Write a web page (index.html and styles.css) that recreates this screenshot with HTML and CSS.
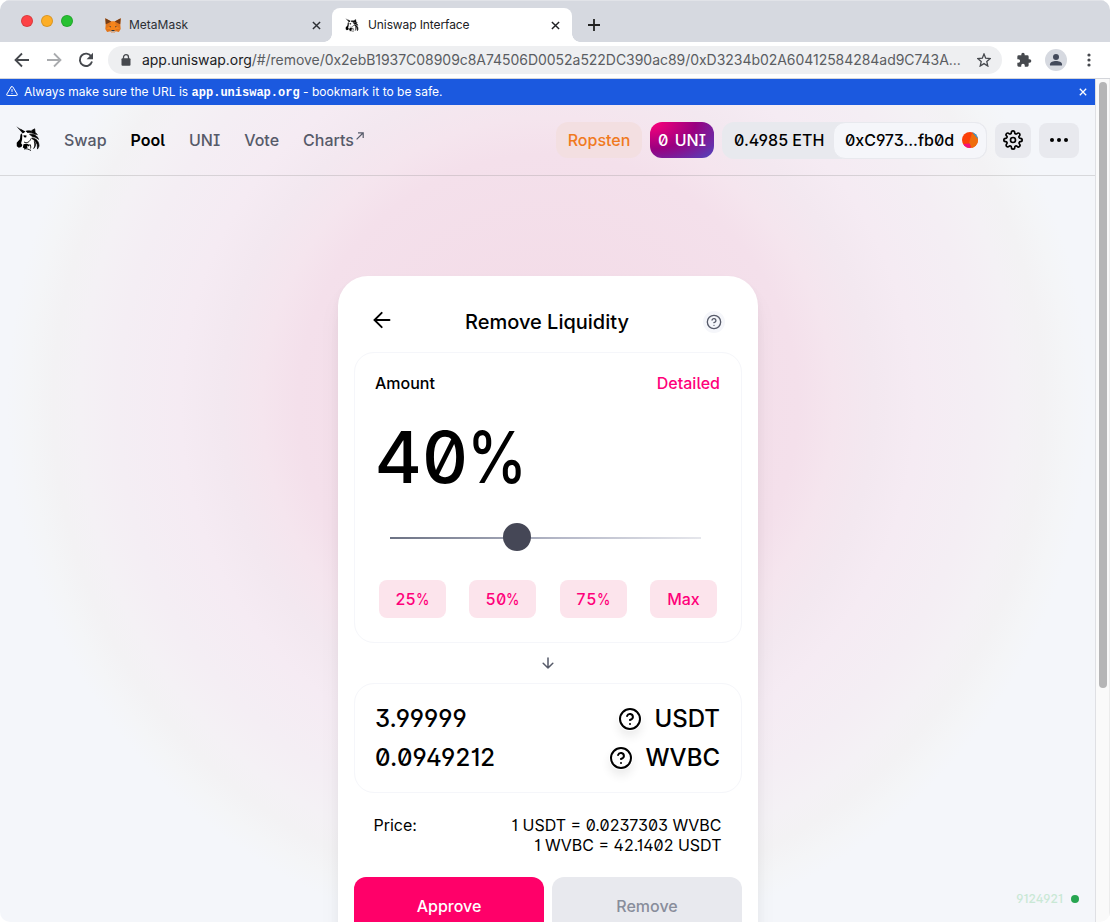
FILE: index.html
```html
<!DOCTYPE html>
<html lang="en">
<head>
<meta charset="utf-8">
<title>Uniswap Interface</title>
<link rel="stylesheet" href="styles.css">
</head>
<body>
<svg width="0" height="0" class="defs">
  <symbol id="unicorn" viewBox="0 0 24 25">
    <path fill="#fff" d="M7 7 13 5l6 3 2 6-2 7-5 2-8-2-2-5z"/>
    <path d="M.3.3 8.200 5.800 6.800 7.400z"/>
    <path d="M4 2.400 9.300 5.500 7.600 7.200z"/>
    <path d="M5.300 7.200C3.800 9 4.600 11 3.800 13.200L.7 16.800l.1 3.400 2 1.500 2.600-.6 1-2-1.300-1.800 1-3.800L6.300 9z"/>
    <path d="M7.400 9.300l3.200.1-.5 2.200-2.100-.3z"/>
    <path stroke="#000" stroke-width=".7" d="M10 5.200c3.600-1 7.600-.2 9.500 3.200-2.800-1.600-5-1.900-8.200-1.900zM13.500 8.300c4.400-.8 7.900 1.500 9.100 5.100-2.100-1.800-3.600-2.400-6-2.700zM15.800 12c4.100.1 7.300 3.300 7.200 8.100l-1.500 3-.2-4.300c-.9-2.600-3.100-4.700-5.500-6.400zM15.700 4.500l3-1.700.4 3.500 2.300 2.400-2.900-1.400zM18.300 15.300c1.700 2.200 1.800 4.700-.6 7.200 1.400-2.300 1.200-4.400.6-7.200z"/>
    <path fill="none" stroke="#000" stroke-width=".9" d="M8 16c3 1.800 6-.4 7-3.500M8 23c2.500-.8 5 .4 7 1.500M13.500 18c1.300 1 1.500 2.800 1 4.500"/>
    <path d="M7.500 18.300c2-1.200 5-.6 6.300 1l-1.100 1.200-1.700-1 .6 2-2.300 1.600-2.500-1.500z"/>
  </symbol>
  <symbol id="help" viewBox="0 0 24 24">
    <g fill="none" stroke="currentColor" stroke-width="2" stroke-linecap="round" stroke-linejoin="round"><circle cx="12" cy="12" r="10"/><path d="M9.090 9a3 3 0 0 1 5.830 1c0 2-3 3-3 3M12 17h.01"/></g>
  </symbol>
  <symbol id="cross" viewBox="0 0 10 10"><path fill="none" stroke="currentColor" stroke-width="1.600" d="M1 1l8 8M9 1 1 9"/></symbol>
</svg>
<div class="window">
  <div class="tabstrip">
    <div class="lights"><i class="red"></i><i class="amber"></i><i class="green"></i></div>
    <div class="tab">
      <svg class="fox" viewBox="0 0 16 15"><path fill="#e2761b" d="M.3.3 6.300 3.500h3.400L15.700.3l-.4 6.200.4 4.500-1.800 3-3.200-.8-1.300 1.500H6.600l-1.300-1.500-3.200.8L.3 11l.4-4.500z"/><path fill="#763d16" d="M.3.3 6.300 3.500 2.500 5.400.8 6.200zM15.700.3 9.700 3.500l3.800 1.900 1.700.8z"/><path fill="#f6851b" d="M6.300 3.500 5 7.500 1 11h4l1.500 2h3L11 11h4l-4-3.500-1.300-4z"/><path fill="#233447" d="M4 8l2 .5-.3 1zM12 8l-2 .5.3 1zM6.600 12h2.800l.2 1.300H6.400z"/><path fill="#d7c1b3" d="M5.300 12.400l1.100.9h3.200l1.100-.9-1.300 2.300H6.600z"/></svg>
      <span class="tab-title">MetaMask</span>
      <svg class="x"><use href="#cross"/></svg>
    </div>
    <div class="tab active">
      <svg class="uni"><use href="#unicorn"/></svg>
      <span class="tab-title">Uniswap Interface</span>
      <svg class="x"><use href="#cross"/></svg>
    </div>
    <svg class="plus" viewBox="0 0 12 12"><path stroke="#222" stroke-width="1.800" d="M6 0v12M0 6h12"/></svg>
  </div>
  <div class="toolbar">
    <svg class="nav" viewBox="0 0 16 16"><path fill="none" stroke="#46494e" stroke-width="1.800" d="M15 8H2M8 1.500 1.500 8 8 14.500"/></svg>
    <svg class="nav" viewBox="0 0 16 16"><path fill="none" stroke="#a9abae" stroke-width="1.800" d="M1 8h13M8 1.500 14.500 8 8 14.500"/></svg>
    <svg class="nav" viewBox="0 0 16 16"><path fill="none" stroke="#46494e" stroke-width="1.900" d="M13.300 4.500A6.200 6.200 0 1 0 14 9.500"/><path fill="#46494e" d="M15 .8v6.400H8.600z"/></svg>
    <div class="omnibox">
      <svg class="lock" viewBox="0 0 10 12"><rect x=".5" y="4.300" width="9" height="7.500" rx="1" fill="#46494e"/><path fill="none" stroke="#46494e" stroke-width="1.300" d="M2.500 5V3.200a2.500 2.500 0 0 1 5 0V5"/></svg>
      <span class="url"><b>app.uniswap.org</b>/#/remove/0x2ebB1937C08909c8A74506D0052a522DC390ac89/0xD3234b02A60412584284ad9C743A...</span>
      <svg class="star" viewBox="0 0 14 14"><path fill="none" stroke="#46494e" stroke-width="1.300" d="M7 1l1.700 4.200 4.500.4-3.400 3 1 4.400L7 10.600 3.200 13l1-4.400-3.400-3 4.500-.4z"/></svg>
    </div>
    <svg class="puzzle" viewBox="0 0 24 24"><path fill="#46494e" d="M20.500 11H19V7a2 2 0 0 0-2-2h-4V3.500a2.500 2.500 0 0 0-5 0V5H4a2 2 0 0 0-2 2v3.800h1.500a2.700 2.700 0 0 1 0 5.400H2V20a2 2 0 0 0 2 2h3.800v-1.500a2.700 2.700 0 0 1 5.400 0V22H17a2 2 0 0 0 2-2v-4h1.500a2.500 2.500 0 0 0 0-5z"/></svg>
    <svg class="person" viewBox="0 0 22 22"><circle cx="11" cy="11" r="11" fill="#d6d9e0"/><circle cx="11" cy="8" r="3" fill="#434a5b"/><path fill="#434a5b" d="M5 16.500v-1.200c0-2.200 3.300-3.200 6-3.200s6 1 6 3.200v1.200z"/></svg>
    <svg class="menu" viewBox="0 0 4 14"><g fill="#46494e"><circle cx="2" cy="2" r="1.600"/><circle cx="2" cy="7" r="1.600"/><circle cx="2" cy="12" r="1.600"/></g></svg>
  </div>
  <div class="viewport">
    <div class="page">
      <div class="banner">
        <svg class="warn" viewBox="0 0 24 24"><path fill="none" stroke="#fff" stroke-width="2" stroke-linejoin="round" stroke-linecap="round" d="M10.290 3.860 1.820 18a2 2 0 0 0 1.710 3h16.940a2 2 0 0 0 1.710-3L13.710 3.860a2 2 0 0 0-3.420 0zM12 9v4M12 17h.01"/></svg>
        <span class="banner-text">Always make sure the URL is <code>app.uniswap.org</code> - bookmark it to be safe.</span>
        <svg class="bx"><use href="#cross"/></svg>
      </div>
      <header class="header">
        <svg class="logo"><use href="#unicorn"/></svg>
        <nav class="links">
          <a>Swap</a><a class="current">Pool</a><a>UNI</a><a>Vote</a><a>Charts<svg class="ext" viewBox="0 0 8 8"><path fill="none" stroke="currentColor" stroke-width="1.200" d="M.6 7.400 7 1M2 .8h5.200V6"/></svg></a>
        </nav>
        <div class="network">Ropsten</div>
        <div class="unibtn">0 UNI</div>
        <div class="account"><span class="balance">0.4985 ETH</span>
          <div class="address"><span>0xC973...fb0d</span>
            <svg class="jazz" viewBox="0 0 16 16"><clipPath id="c"><circle cx="8" cy="8" r="8"/></clipPath><g clip-path="url(#c)"><path fill="#fb3f08" d="M0 0h16v16H0z"/><path fill="#ee6d0c" d="M10 1l6 5v10h-6L7 11z"/><path fill="#1ba5e8" d="M10 0h6v7z"/><path fill="#f3107c" d="M1 12l7-.5.500 4.500H3z"/></g></svg></div>
        </div>
        <div class="iconbtn gear"><svg width="20" height="20" viewBox="0 0 24 24"><g fill="none" stroke="#000" stroke-width="2" stroke-linejoin="round"><circle cx="12" cy="12" r="3"/><path d="M19.400 15a1.650 1.650 0 0 0 .33 1.820l.06.06a2 2 0 0 1-2.830 2.830l-.06-.06a1.650 1.650 0 0 0-2.800 1.170V21a2 2 0 0 1-4 0v-.09a1.650 1.650 0 0 0-2.880-1.260l-.06.06a2 2 0 1 1-2.830-2.830l.06-.06A1.650 1.650 0 0 0 3.090 14H3a2 2 0 0 1 0-4h.09a1.650 1.650 0 0 0 1.260-2.880l-.06-.06a2 2 0 1 1 2.830-2.830l.06.06A1.650 1.650 0 0 0 10 3.090V3a2 2 0 0 1 4 0v.09a1.650 1.650 0 0 0 2.820 1.200l.06-.06a2 2 0 1 1 2.830 2.830l-.06.06A1.650 1.650 0 0 0 20.910 10H21a2 2 0 0 1 0 4h-.09a1.650 1.650 0 0 0-1.510 1z"/></g></svg></div>
        <div class="iconbtn dots"><svg width="18" height="4" viewBox="0 0 18 4"><circle cx="2" cy="2" r="2"/><circle cx="9" cy="2" r="2"/><circle cx="16" cy="2" r="2"/></svg></div>
      </header>
      <main class="card">
        <div class="card-head">
          <svg class="back" viewBox="0 0 18 18"><path fill="none" stroke="#000" stroke-width="1.900" stroke-linecap="round" d="M16.500 9H2M8.700 1.800 1.500 9l7.200 7.200"/></svg>
          <h1>Remove Liquidity</h1>
          <span class="tip"><svg width="16" height="16"><use href="#help"/></svg></span>
        </div>
        <section class="panel amount">
          <div class="row"><span>Amount</span><span class="pink">Detailed</span></div>
          <div class="percent">40<span class="sign">%</span></div>
          <div class="slider"><i class="knob"></i></div>
          <div class="presets"><button>25<span class="sign">%</span></button><button>50<span class="sign">%</span></button><button>75<span class="sign">%</span></button><button>Max</button></div>
        </section>
        <svg class="down" viewBox="0 0 12 12"><path fill="none" stroke="#565a69" stroke-width="1.500" stroke-linecap="round" stroke-linejoin="round" d="M6 1v10M1.200 6.300 6 11l4.800-4.700"/></svg>
        <section class="panel tokens">
          <div class="trow"><span>3.99999</span><span class="token"><svg width="24" height="24"><use href="#help"/></svg>USDT</span></div>
          <div class="trow"><span class="wide">0.0949212</span><span class="token"><svg width="24" height="24"><use href="#help"/></svg>WVBC</span></div>
        </section>
        <div class="price"><span>Price:</span><div class="rates"><div>1 USDT = 0.0237303 WVBC</div><div>1 WVBC = 42.1402 USDT</div></div></div>
        <div class="actions"><div class="approve">Approve</div><div class="remove">Remove</div></div>
      </main>
      <div class="block"><span>9124921</span><i></i></div>
    </div>
    <div class="scroll"><i></i></div>
  </div>
</div>
</body>
</html>
```
FILE: styles.css
```css
* { box-sizing: border-box; }
body { margin: 0; background: #fff; font-family: Inter, "Liberation Sans", sans-serif; }
.defs { position: absolute; }
svg { display: block; flex: none; }
.window { width: 1110px; height: 922px; border-radius: 10px; overflow: hidden; display: flex; flex-direction: column; }
.tabstrip { height: 42px; background: #d6d9e0; border-top: 1px solid #e1e3e8; display: flex; align-items: flex-start; padding-left: 21px; }
.lights { display: flex; gap: 8px; margin-top: 14px; width: 71px; }
.lights i { width: 12px; height: 12px; border-radius: 50%; border: 1px solid #0002; }
.red { background: #fd4246; }
.amber { background: #fdae26; }
.green { background: #27c132; }
.tab { width: 240px; height: 34px; margin-top: 7px; display: flex; align-items: center; padding: 0 11px 0 13px; border-radius: 8px 8px 0 0; color: #2c2f34; position: relative; }
.tab.active { background: #fff; color: #202124; padding-right: 12px; }
.tab.active::before, .tab.active::after { content: ""; position: absolute; bottom: 0; width: 8px; height: 8px; }
.tab.active::before { left: -8px; background: radial-gradient(circle at 0 0, transparent 7.500px, #fff 8px); }
.tab.active::after { right: -8px; background: radial-gradient(circle at 100% 0, transparent 7.500px, #fff 8px); }
.fox { width: 16px; height: 15px; }
.uni { width: 14px; height: 14px; margin-right: 1px; }
.tab-title { font-size: 12px; margin-left: 8px; flex: 1; padding-bottom: 2px; }
.tab.active .tab-title { letter-spacing: -.1px; }
.x { width: 9px; height: 9px; }
.plus { width: 12px; height: 12px; margin: 18px 0 0 16px; }
.toolbar { height: 37px; background: #fff; border-bottom: 1px solid #d3d5da; display: flex; align-items: center; padding-left: 14px; }
.nav { width: 16px; height: 16px; margin-right: 16px; }
.omnibox { width: 894px; height: 28px; border-radius: 14px; background: #eeeff1; display: flex; align-items: center; padding: 0 11px 0 13px; margin-left: -2px; }
.lock { width: 10px; height: 12px; }
.url { margin-left: 11px; font-size: 14px; letter-spacing: -.04px; color: #5a5d62; flex: 1; white-space: nowrap; padding-bottom: 1px; }
.url b { font-weight: 400; color: #202124; }
.star { width: 14px; height: 14px; }
.puzzle { width: 16px; height: 16px; margin-left: 14px; }
.person { width: 22px; height: 22px; margin-left: 13px; }
.menu { width: 4px; height: 14px; margin-left: 20px; }
.viewport { flex: 1; min-height: 0; display: flex; }
.page { width: 1095px; position: relative; overflow: hidden; font-feature-settings: "ss01", "ss02", "cv01", "cv03", "cv09"; background: radial-gradient(circle at 548px 325px, #f3dae6 0, #f4e0eb 250px, #f5e5ee 286px, #f3e8f0 326px, #f5ebf3 368px, #f4eef4 430px, #f4f1f5 468px, #f3f2f4 495px, #f4f5f7 520px, #f4f6fa 541px); }
.banner { height: 26px; background: #1b59df; color: #fff; display: flex; align-items: center; padding: 0 8px 0 6px; }
.warn { width: 12px; height: 12px; margin-top: -3px; }
.banner-text { font-size: 12px; margin-left: 6px; flex: 1; letter-spacing: .02px; white-space: nowrap; }
.banner-text code { font: bold 12px "Liberation Mono", monospace; letter-spacing: 0; }
.bx { width: 8px; height: 8px; }
.header { height: 71px; border-bottom: 1px solid #8884; display: flex; align-items: center; padding: 0 16px; font-size: 16px; font-weight: 500; }
.header > * { flex: none; }
.logo { width: 24px; height: 25px; margin-top: -3px; }
.links { display: flex; gap: 24px; margin-left: 24px; color: #565a69; width: 492px; }
.links a { display: flex; }
.links .current { color: #000; font-weight: 600; }
.ext { width: 8px; height: 8px; margin: 2px 0 0 2px; }
.network { width: 86px; height: 36px; border-radius: 12px; background: #f3dfe1; color: #f07a1e; display: grid; place-items: center; }
.unibtn { width: 64px; height: 36px; border-radius: 12px; margin-left: 8px; color: #fff; display: grid; place-items: center; word-spacing: 2px; background: radial-gradient(174.470% 188.910% at 1.840% 0%, #ff007a 0%, #990080 40%, #2172e5 100%); }
.account { display: flex; align-items: center; height: 37px; width: 265px; margin-left: 8px; background: #e8e9ee; border-radius: 12px; }
.balance { width: 111px; flex: none; padding-left: 12px; white-space: nowrap; }
.address { flex: 1; height: 37px; border-radius: 12px; border: 1px solid #e8e9ee; background: #f5f6fa; display: flex; align-items: center; justify-content: space-between; padding: 0 8px 0 11px; }
.jazz { width: 16px; height: 16px; }
.iconbtn { height: 35px; border-radius: 8px; background: #e8e9ee; display: grid; place-items: center; }
.gear { width: 36px; margin-left: 8px; }
.dots { width: 40px; margin-left: 8px; }
.card { width: 420px; height: 800px; margin: 100px auto 0 338px; background: #fff; border-radius: 30px; padding: 0 16px; box-shadow: 0 0 1px #00000003, 0 4px 8px #0000000a, 0 16px 24px #0000000a, 0 24px 32px #00000003; }
.card-head { height: 76px; display: flex; align-items: center; justify-content: space-between; padding: 15px 17px 0 19px; }
.card-head h1 { margin: 0; font-size: 20px; font-weight: 500; }
.back { width: 18px; height: 18px; margin-top: -4px; }
.tip { width: 22px; height: 22px; border-radius: 50%; background: #f5f6fa; color: #565a69; display: grid; place-items: center; }
.panel { border: 1px solid #f5f6fa; border-radius: 20px; }
.amount { height: 291px; padding: 19px 21px 0 20px; }
.row { display: flex; justify-content: space-between; line-height: 22px; font-size: 16px; font-weight: 500; }
.pink { color: #ff007a; }
.percent { font-size: 72px; font-weight: 500; line-height: 87px; margin-top: 19px; font-feature-settings: "ss02", "tnum", "cv01"; }
.sign { display: inline-block; transform: scaleX(.84); transform-origin: left; }
.percent .sign { margin-left: -1px; }
.slider { height: 2px; width: 311px; margin: 37px 0 0 15px; background: linear-gradient(90deg, #6c7284, #b5b8c8 55%, #e6e7ec); display: flex; align-items: center; }
.knob { width: 28px; height: 28px; border-radius: 50%; background: #454756; margin: -2px 0 0 113px; flex: none; }
.presets { display: flex; justify-content: space-between; padding: 0 3px 0 4px; margin-top: 41px; }
.presets button { width: 67px; height: 38px; border: 0; border-radius: 8px; background: #fce4ec; color: #ff007a; font: 500 16px Inter, sans-serif; font-feature-settings: "ss02", "tnum"; padding: 0; }
.presets .sign { margin-right: -2px; }
.down { width: 12px; height: 12px; margin: 14px auto; }
.tokens { height: 110px; padding: 15px 21px 15px 20px; }
.trow { height: 39px; display: flex; align-items: center; justify-content: space-between; font-size: 24px; font-weight: 500; }
.wide { letter-spacing: .2px; }
.token { display: flex; align-items: center; gap: 12px; }
.token svg { border-radius: 50%; box-shadow: 0 6px 10px #00000013; }
.price { display: flex; justify-content: space-between; padding: 0 20.500px 0 19.500px; margin-top: 22px; font-size: 16px; line-height: 20px; }
.rates { text-align: right; }
.actions { display: flex; gap: 8px; margin-top: 22px; }
.actions div { flex: 1; height: 58px; border-radius: 12px; display: grid; place-items: center; font-weight: 500; font-size: 16px; }
.approve { background: #ff0069; color: #fff; }
.remove { background: #e8e9ee; color: #888d9b; }
.block { position: absolute; right: 16px; bottom: 16px; display: flex; align-items: center; gap: 8px; font-size: 12px; font-weight: 500; letter-spacing: .1px; color: #c9e8d5; }
.block i { width: 8px; height: 8px; border-radius: 50%; background: #27a550; }
.scroll { width: 15px; background: #fafafa; border-left: 1px solid #dfe0e4; border-right: 1px solid #ececec; padding: 3px 0 0 3px; }
.scroll i { display: block; width: 8px; height: 606px; border-radius: 4px; background: #b5b5b6; }
```
